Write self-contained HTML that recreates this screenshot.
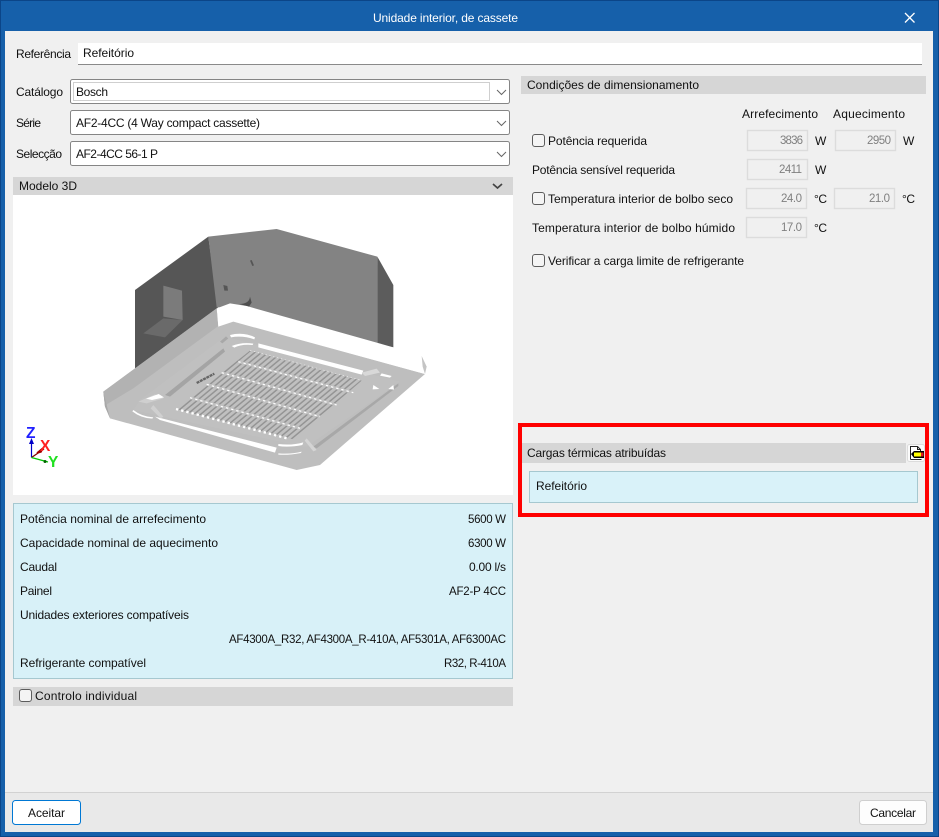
<!DOCTYPE html>
<html><head><meta charset="utf-8"><title>Unidade interior, de cassete</title>
<style>
html,body{margin:0;padding:0;background:#f0f0f0;width:939px;height:837px;overflow:hidden}
svg{display:block}
text{font-family:"Liberation Sans",sans-serif;font-size:12px;fill:#111}
.v{fill:#808080;font-size:11.5px}
.t{fill:#fff}
.box{fill:#f0f0f0;stroke:#dcdcdc;stroke-width:1.4}
.chk{fill:#f4f4f4;stroke:#5c5c5c;stroke-width:1}
.cmb{fill:#fff;stroke:#858585;stroke-width:1}
.chev{fill:none;stroke:#666;stroke-width:1}
</style></head>
<body>
<svg width="939" height="837" viewBox="0 0 939 837" xmlns="http://www.w3.org/2000/svg">
<defs>
<pattern id="h" width="1" height="1" patternUnits="userSpaceOnUse" patternTransform="matrix(15 4.200 30 -25 0 0)">
<rect width="1" height="1" fill="#c0c0c0"/>
<rect x=".3" width=".34" height="1" fill="#939393"/>
</pattern>
</defs>
<!-- window -->
<rect width="939" height="837" fill="#1660aa"/>
<rect x="0.5" y="0.5" width="938" height="836" fill="none" stroke="#0b4588"/>
<rect x="5" y="31" width="928" height="801" fill="#f0f0f0"/>
<rect x="5" y="792" width="928" height="40" fill="#e9e9e9"/>
<rect x="5" y="792" width="928" height="1" fill="#d2d2d2"/>
<text class="t" x="373" y="22" textLength="145" lengthAdjust="spacing">Unidade interior, de cassete</text>
<path d="M905 13l9.500 9.500M914.500 13L905 22.500" stroke="#fff" stroke-width="1.300" fill="none"/>

<!-- reference -->
<text x="16" y="58" textLength="55" lengthAdjust="spacing">Referência</text>
<rect x="78" y="43" width="844" height="22" fill="#fff"/>
<rect x="78" y="64" width="844" height="1" fill="#8a8a8a"/>
<text x="83" y="57" textLength="51" lengthAdjust="spacing">Refeitório</text>

<!-- combos -->
<text x="16" y="96" textLength="47" lengthAdjust="spacing">Catálogo</text>
<rect class="cmb" x="70.500" y="79.500" width="439" height="24" rx="2"/>
<rect x="73.500" y="82.500" width="416" height="18" fill="#fff" stroke="#cfcfcf"/>
<text x="76" y="96" textLength="32" lengthAdjust="spacing">Bosch</text>
<path class="chev" d="M497 90l4.500 4.500 4.500-4.500"/>
<text x="16" y="127" textLength="25" lengthAdjust="spacing">Série</text>
<rect class="cmb" x="70.500" y="110.500" width="439" height="24" rx="2"/>
<text x="76" y="127" textLength="184" lengthAdjust="spacing">AF2-4CC (4 Way compact cassette)</text>
<path class="chev" d="M497 121l4.500 4.500 4.500-4.500"/>
<text x="16" y="158" textLength="46" lengthAdjust="spacing">Selecção</text>
<rect class="cmb" x="70.500" y="141.500" width="439" height="24" rx="2"/>
<text x="76" y="158" textLength="82" lengthAdjust="spacing">AF2-4CC 56-1 P</text>
<path class="chev" d="M497 152l4.500 4.500 4.500-4.500"/>

<!-- 3D header -->
<rect x="13" y="177" width="500" height="18" fill="#d6d6d6"/>
<text x="19" y="190" textLength="58" lengthAdjust="spacing">Modelo 3D</text>
<path d="M493 184l4.500 4 4.500-4" fill="none" stroke="#444" stroke-width="1.700"/>
<rect x="13" y="195" width="500" height="300" fill="#fff"/>

<!-- 3D model -->
<g transform="translate(90 220) scale(.33333)">
<polygon points="135,210 355,50 385,275 380,330 135,445" fill="#565656"/>
<polygon points="355,50 560,27 862,110 862,372 470,262 380,262" fill="#838383"/>
<polygon points="862,110 910,195 910,382 862,372" fill="#5c5c5c"/>
<polygon points="220,197 276,212 278,300 220,290" fill="#7b7b7b"/>
<polygon points="160,340 220,295 278,300 225,352" fill="#6a6a6a"/>
<polygon points="400,195 412,198 414,212 403,212" fill="#555"/>
<polygon points="480,122 485,120 492,136 487,138" fill="#555"/>
<path d="M448 252q30 0 32-22l5 18-8 12z" fill="#4e4e4e"/>
<!-- panel -->
<polygon points="40,515 380,265 385,320 430,305 1005,462 690,735 620,750 60,595 45,560" fill="#bebebe"/>
<polygon points="40,515 380,265 385,318 130,505 52,552 45,560" fill="#b2b2b2"/>
<polygon points="380,265 420,250 470,258 910,382 995,408 1010,440 1005,462 430,303 400,305 385,320" fill="#fff"/>
<polygon points="995,408 1010,440 1005,462 998,440" fill="#c4c4c4"/>
<polygon points="40,515 60,595 45,560" fill="#a8a8a8"/>
<!-- inner recess -->
<polygon points="150,540 405,350 930,485 650,680 640,680 130,570" fill="#c0c0c0"/>
<polygon points="225,525 400,385 405,395 240,530" fill="#a4a4a4"/>
<polygon points="670,680 925,490 925,498 680,685" fill="#a8a8a8"/>
<!-- white slots -->
<polygon points="505,370 820,452 815,464 505,382" fill="#fff"/>
<polygon points="195,590 560,683 555,698 210,600" fill="#fff"/>
<path d="M420 345q40-10 75 7l-2 6q-35-12-70-6z" fill="#fff"/>
<path d="M425 378q30-12 65-7l-2 4q-35-3-55 8z" fill="#fff"/>
<path d="M565 672q40 5 75-5l-3 8q-40 8-72 3z" fill="#fff"/>
<path d="M565 700q40 3 70-5l-2 4q-35 7-68 5z" fill="#fff"/>
<path d="M145 545l50-22 25 12-50 15z" fill="#cfcfcf"/>
<path d="M168 536l38-14 16 10-36 8z" fill="#fff"/>
<path d="M130 570q25 20 60 22l-3 4q-35-2-60-22z" fill="#fff"/>
<path d="M190 555l30 35-8 5-30-30z" fill="#d0d0d0"/>
<path d="M815 458l45-12 10 12-45 10z" fill="#d8d8d8"/>
<path d="M875 460l30 8-5 5-30-6z" fill="#fff"/>
<path d="M850 495l18 12-20 1z" fill="#fff"/>
<path d="M895 507l15-12 2 14z" fill="#fff"/>
<path d="M650 655l30 35-10 4-26-32z" fill="#d4d4d4"/>
<path d="M390 365l18-16 7 6-18 15z" fill="#a8a8a8"/>
<!-- grille -->
<polygon points="480,392 815,482 610,658 258,567" fill="url(#h)"/>
<g fill="none" stroke="#c0c0c0" stroke-width="8">
<line x1="445" y1="425" x2="790" y2="518"/>
<line x1="395" y1="458" x2="740" y2="555"/>
<line x1="350" y1="493" x2="690" y2="590"/>
<line x1="300" y1="533" x2="630" y2="625"/>
</g>
<g fill="none" stroke="#fff" stroke-width="3.500" stroke-dasharray="7 9">
<line x1="445" y1="425" x2="790" y2="518"/>
<line x1="395" y1="458" x2="740" y2="555"/>
<line x1="350" y1="493" x2="690" y2="590"/>
<line x1="300" y1="533" x2="630" y2="625"/>
</g>
<line x1="480" y1="391" x2="815" y2="481" stroke="#eee" stroke-width="2" stroke-dasharray="4 8"/>
<line x1="258" y1="567" x2="595" y2="656" stroke="#fff" stroke-width="7" stroke-dasharray="7 9"/>
<line x1="320" y1="489" x2="373" y2="461" stroke="#666" stroke-width="7" stroke-dasharray="9 2"/>
</g>

<!-- axes -->
<g>
<line x1="31.500" y1="457.500" x2="31.500" y2="441" stroke="#0000c8" stroke-width="1.200"/>
<polygon points="31.500,438 34,444 29,444" fill="#0000c8"/>
<line x1="31.500" y1="457.500" x2="44" y2="449" stroke="#800000" stroke-width="1.300"/>
<polygon points="37,453 43,448 41,452" fill="#a00000" stroke="#a00000" stroke-width="1.500"/>
<line x1="31.500" y1="457.500" x2="48" y2="462" stroke="#00c800" stroke-width="1.200"/>
<circle cx="45" cy="461.500" r="1.500" fill="#006000"/>
<text x="26" y="438" style="font-size:15.500px;font-weight:bold;fill:#2020ff">Z</text>
<text x="40" y="451" style="font-size:15.500px;font-weight:bold;fill:#ff2020">X</text>
<text x="48" y="467" style="font-size:15.500px;font-weight:bold;fill:#20e020">Y</text>
</g>

<!-- info box -->
<rect x="13.500" y="503.500" width="499" height="175" fill="#d8f1f8" stroke="#a6c8d0"/>
<text x="20" y="523" textLength="186" lengthAdjust="spacing">Potência nominal de arrefecimento</text>
<text x="468" y="523" textLength="38" lengthAdjust="spacing" style="font-size:11.500px">5600 W</text>
<text x="20" y="547" textLength="198" lengthAdjust="spacing">Capacidade nominal de aquecimento</text>
<text x="468" y="547" textLength="38" lengthAdjust="spacing" style="font-size:11.500px">6300 W</text>
<text x="20" y="571" textLength="37" lengthAdjust="spacing">Caudal</text>
<text x="469" y="571" textLength="37" lengthAdjust="spacing">0.00 l/s</text>
<text x="20" y="595" textLength="32" lengthAdjust="spacing">Painel</text>
<text x="449" y="595" textLength="57" lengthAdjust="spacing" style="font-size:11.500px">AF2-P 4CC</text>
<text x="20" y="619" textLength="169" lengthAdjust="spacing">Unidades exteriores compatíveis</text>
<text x="229" y="643" textLength="277" lengthAdjust="spacing" style="font-size:11.500px">AF4300A_R32, AF4300A_R-410A, AF5301A, AF6300AC</text>
<text x="20" y="667" textLength="126" lengthAdjust="spacing">Refrigerante compatível</text>
<text x="444" y="667" textLength="62" lengthAdjust="spacing" style="font-size:11.500px">R32, R-410A</text>

<!-- individual control -->
<rect x="13" y="687" width="500" height="19" fill="#d6d6d6"/>
<rect class="chk" x="19.500" y="689.500" width="12" height="12" rx="2.500"/>
<text x="35" y="700" textLength="102" lengthAdjust="spacing">Controlo individual</text>

<!-- right panel -->
<rect x="521" y="76" width="405" height="18" fill="#d6d6d6"/>
<text x="527" y="89" textLength="172" lengthAdjust="spacing">Condições de dimensionamento</text>
<text x="742" y="118" textLength="76" lengthAdjust="spacing">Arrefecimento</text>
<text x="833" y="118" textLength="72" lengthAdjust="spacing">Aquecimento</text>

<rect class="chk" x="532.500" y="134.500" width="12" height="12" rx="2.500"/>
<text x="548" y="145" textLength="99" lengthAdjust="spacing">Potência requerida</text>
<rect class="box" x="747.500" y="130.500" width="60" height="20"/>
<text class="v" x="780" y="144" textLength="23" lengthAdjust="spacing">3836</text>
<text x="815" y="145" textLength="11" lengthAdjust="spacing">W</text>
<rect class="box" x="835.500" y="130.500" width="60" height="20"/>
<text class="v" x="867" y="144" textLength="24" lengthAdjust="spacing">2950</text>
<text x="903" y="145" textLength="11" lengthAdjust="spacing">W</text>

<text x="532" y="174" textLength="143" lengthAdjust="spacing">Potência sensível requerida</text>
<rect class="box" x="747.500" y="159.500" width="60" height="20"/>
<text class="v" x="779" y="173" textLength="23" lengthAdjust="spacing">2411</text>
<text x="815" y="174" textLength="11" lengthAdjust="spacing">W</text>

<rect class="chk" x="532.500" y="192.500" width="12" height="12" rx="2.500"/>
<text x="548" y="203" textLength="185" lengthAdjust="spacing">Temperatura interior de bolbo seco</text>
<rect class="box" x="746.500" y="188.500" width="60" height="20"/>
<text class="v" x="781" y="202" textLength="21" lengthAdjust="spacing">24.0</text>
<text x="814" y="203" textLength="13" lengthAdjust="spacing">°C</text>
<rect class="box" x="834.500" y="188.500" width="60" height="20"/>
<text class="v" x="869" y="202" textLength="21" lengthAdjust="spacing">21.0</text>
<text x="902" y="203" textLength="13" lengthAdjust="spacing">°C</text>

<text x="532" y="232" textLength="203" lengthAdjust="spacing">Temperatura interior de bolbo húmido</text>
<rect class="box" x="746.500" y="217.500" width="60" height="20"/>
<text class="v" x="781" y="231" textLength="21" lengthAdjust="spacing">17.0</text>
<text x="814" y="232" textLength="13" lengthAdjust="spacing">°C</text>

<rect class="chk" x="532.500" y="254.500" width="12" height="12" rx="2.500"/>
<text x="548" y="265" textLength="196" lengthAdjust="spacing">Verificar a carga limite de refrigerante</text>

<!-- assigned loads -->
<rect x="521" y="443" width="385" height="20" fill="#d6d6d6"/>
<text x="527" y="457" textLength="139" lengthAdjust="spacing">Cargas térmicas atribuídas</text>
<rect x="907.500" y="444.500" width="17" height="17" rx="2" fill="#fbfbfb" stroke="#dcdcdc"/>
<path d="M910.500 459.500v-13h7l3 3v3" fill="#fff" stroke="#222" stroke-width="1"/>
<path d="M917.500 446.500v3h3" fill="none" stroke="#222"/>
<path d="M910.500 459.500h11" stroke="#222" fill="none"/>
<polygon points="911,454 914,451 924,451 924,458 914,458" fill="#000"/>
<rect x="914" y="452.500" width="7" height="4" fill="#ffff00"/>
<rect x="921" y="452.500" width="2.500" height="4" fill="#e02020"/>
<rect x="529.500" y="471.500" width="388" height="31" fill="#d9f2f9" stroke="#a6c8d0"/>
<text x="536" y="490" textLength="51" lengthAdjust="spacing">Refeitório</text>
<path d="M520 425H927V515H520Z" fill="none" stroke="#ff0000" stroke-width="4"/>

<!-- footer buttons -->
<rect x="12.500" y="800.500" width="68" height="24" rx="3" fill="#fff" stroke="#0078d4" stroke-width="1"/>
<text x="28" y="817" textLength="37" lengthAdjust="spacing">Aceitar</text>
<rect x="859.500" y="800.500" width="67" height="24" rx="3" fill="#fdfdfd" stroke="#cfcfcf"/>
<text x="870" y="817" textLength="46" lengthAdjust="spacing">Cancelar</text>
</svg>
</body></html>
